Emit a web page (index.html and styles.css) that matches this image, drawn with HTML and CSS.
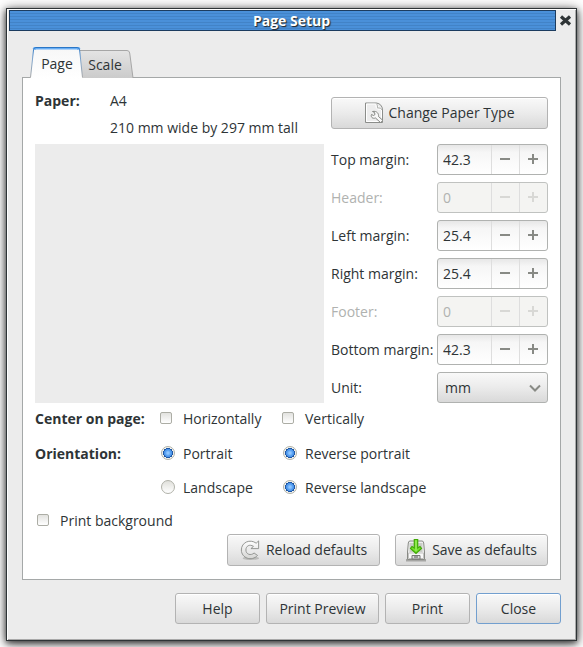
FILE: index.html
```html
<!DOCTYPE html>
<html lang="en">
<head>
<meta charset="utf-8">
<title>Page Setup</title>
<link rel="stylesheet" href="styles.css">
</head>
<body>
<main class="window">
  <header class="titlebar">
    <h1 class="title">Page Setup</h1>
    <button class="window-close" type="button" aria-label="Close window">
      <svg width="13" height="13" viewBox="0 0 13 13"><path d="M2 2.500 11 10.500M11 2.500 2 10.500" stroke="#2e3436" stroke-width="3.200" fill="none"/></svg>
    </button>
  </header>

  <div class="content">
    <nav class="tabs" role="tablist">
      <button class="tab tab-active" type="button" role="tab" aria-selected="true">
        <svg class="tab-shape" width="54" height="32" viewBox="0 0 54 32">
          <defs>
            <linearGradient id="edge" x1="0" y1="0" x2="0" y2="1"><stop offset="0" stop-color="#2a76c6"/><stop offset=".4" stop-color="#7fa5cd"/><stop offset="1" stop-color="#a6a6a6"/></linearGradient>
            <linearGradient id="face" x1="0" y1="0" x2="0" y2="1"><stop offset="0" stop-color="#f7f7f7"/><stop offset="1" stop-color="#fff"/></linearGradient>
          </defs>
          <path d="M.5 32V30.500L3.500 3Q3.800 .5 6 .5H47Q49.300 .5 49.600 3L52.500 30.500V32Z" fill="url(#face)"/>
          <path d="M4 2.500Q4.500 1 6 1H47Q48.600 1 49 2.500" fill="none" stroke="#68aef5" stroke-width="3"/>
          <path d="M.5 30.500 3.500 3Q3.800 .5 6 .5H47Q49.300 .5 49.600 3L52.500 30.500" fill="none" stroke="url(#edge)"/>
        </svg>
        <span class="tab-text">Page</span>
      </button>
      <button class="tab tab-idle" type="button" role="tab" aria-selected="false">
        <svg class="tab-shape" width="54" height="28" viewBox="0 0 54 28">
          <defs><linearGradient id="idle" x1="0" y1="0" x2="0" y2="1"><stop offset="0" stop-color="#e4e4e4"/><stop offset="1" stop-color="#cbcbcb"/></linearGradient></defs>
          <path d="M0 .5H47Q49.300 .5 49.700 3L53 28H0Z" fill="url(#idle)"/>
          <path d="M0 .5H47Q49.300 .5 49.700 3L53 28" fill="none" stroke="#a6a6a6"/>
        </svg>
        <span class="tab-text">Scale</span>
      </button>
    </nav>

    <section class="panel" role="tabpanel">
      <div class="columns">
        <div class="paper">
          <dl class="paper-info">
            <dt class="strong">Paper:</dt>
            <dd>A4</dd>
            <dd class="dimensions">210 mm wide by 297 mm tall</dd>
          </dl>
          <div class="preview"></div>
        </div>

        <form class="margins">
          <button class="button change-paper" type="button">
            <svg width="20" height="22" viewBox="0 0 20 22">
              <path d="M1.500 1H12.500C16 1.500 18.500 4 18.500 8V20.500H1.500Z" fill="#ededed" stroke="#8b8d8a"/>
              <path d="M2.500 2H12V5C12 7 15 7.500 17.500 7.500V19.500H2.500Z" fill="none" stroke="#fff"/>
              <path d="M12 1.500C14 3 13.500 5 13.500 6 15.500 5.500 17.500 6.500 18 8" fill="#fff" stroke="#b3b5b2"/>
              <path d="M8.500 9.500 10.500 10.500 11 12.500 9.500 13.500 7.500 12.500C6.500 15 8.500 17 11.500 16L16.500 20.500 19 18.500 14.500 14.500C15 12 13 8.500 8.500 9.500Z" fill="#f8f8f8" stroke="#858783"/>
            </svg>
            <span>Change Paper Type</span>
          </button>

          <label for="top">Top margin:</label>
          <div class="spin"><input id="top" type="text" value="42.3"><button type="button" aria-label="Decrease top margin"><i class="minus"></i></button><button type="button" aria-label="Increase top margin"><i class="plus"></i></button></div>

          <label class="dim" for="header">Header:</label>
          <div class="spin spin-off"><input id="header" type="text" value="0" disabled><button type="button" disabled aria-label="Decrease header"><i class="minus"></i></button><button type="button" disabled aria-label="Increase header"><i class="plus"></i></button></div>

          <label for="left">Left margin:</label>
          <div class="spin"><input id="left" type="text" value="25.4"><button type="button" aria-label="Decrease left margin"><i class="minus"></i></button><button type="button" aria-label="Increase left margin"><i class="plus"></i></button></div>

          <label for="right">Right margin:</label>
          <div class="spin"><input id="right" type="text" value="25.4"><button type="button" aria-label="Decrease right margin"><i class="minus"></i></button><button type="button" aria-label="Increase right margin"><i class="plus"></i></button></div>

          <label class="dim" for="footer">Footer:</label>
          <div class="spin spin-off"><input id="footer" type="text" value="0" disabled><button type="button" disabled aria-label="Decrease footer"><i class="minus"></i></button><button type="button" disabled aria-label="Increase footer"><i class="plus"></i></button></div>

          <label for="bottom">Bottom margin:</label>
          <div class="spin"><input id="bottom" type="text" value="42.3"><button type="button" aria-label="Decrease bottom margin"><i class="minus"></i></button><button type="button" aria-label="Increase bottom margin"><i class="plus"></i></button></div>

          <label for="unit">Unit:</label>
          <div class="select">
            <select id="unit"><option>mm</option></select>
            <svg class="chevron" width="12" height="8" viewBox="0 0 12 8"><path d="M1 1.500 6 6.500 11 1.500" fill="none" stroke="#888a85" stroke-width="2"/></svg>
          </div>
        </form>
      </div>

      <div class="choices">
        <span class="strong">Center on page:</span>
        <label class="choice"><input class="check" type="checkbox">Horizontally</label>
        <label class="choice"><input class="check" type="checkbox">Vertically</label>
      </div>
      <div class="choices choices-radio">
        <span class="strong">Orientation:</span>
        <label class="choice"><input class="radio" type="radio" name="portrait" checked>Portrait</label>
        <label class="choice"><input class="radio" type="radio" name="reverse-portrait" checked>Reverse portrait</label>
        <span></span>
        <label class="choice"><input class="radio" type="radio" name="landscape">Landscape</label>
        <label class="choice"><input class="radio" type="radio" name="reverse-landscape" checked>Reverse landscape</label>
      </div>
      <label class="choice background"><input class="check" type="checkbox">Print background</label>

      <div class="defaults">
        <button class="button" type="button">
          <svg width="20" height="22" viewBox="0 0 22 23">
            <defs><linearGradient id="metal" x1="0" y1="0" x2="0" y2="1"><stop offset="0" stop-color="#fff"/><stop offset="1" stop-color="#d5d5d3"/></linearGradient></defs>
            <ellipse cx="12" cy="20.500" rx="9" ry="2" fill="#bcbcba"/>
            <path d="M20.500 1.500V10H12L14.800 7.500C10.500 4.800 6.500 7 6.500 11.500 6.500 16.500 12 18 15.500 14.800L19.300 17.500C13 24.500 1.500 20.500 1.500 11.500 1.500 3 11-1 17.800 4Z" fill="url(#metal)" stroke="#8b8d8a"/>
          </svg>
          <span>Reload defaults</span>
        </button>
        <button class="button" type="button">
          <svg width="20" height="23" viewBox="0 0 20 23">
            <rect x="0" y="20" width="20" height="2.500" fill="#a5a5a3"/>
            <path d="M4 2H16Q17.500 2 17.700 4L18.500 13V20.500H1.500V13L2.300 4Q2.500 2 4 2Z" fill="#eee" stroke="#888a85"/>
            <path d="M3.500 4H16.500V13H3.500Z" fill="#c9ccc6"/>
            <path d="M2.500 14H17.500V19.500H2.500Z" fill="#f8f8f8" stroke="#c3c3c1"/>
            <path d="M6 16.500H14V20H6Z" fill="#ddd" stroke="#777"/><path d="M8 18H12" stroke="#555"/>
            <path d="M8.300 .5H11.700V9L14 7.500 15.500 9.500 10 14.500 4.500 9.500 6 7.500 8.300 9Z" fill="#73e02c" stroke="#42a906" stroke-width="1.200"/>
            <path d="M10 1.500V12" stroke="#a6f36a"/>
          </svg>
          <span>Save as defaults</span>
        </button>
      </div>
    </section>

    <footer class="actions">
      <button class="button" type="button">Help</button>
      <button class="button wide" type="button">Print Preview</button>
      <button class="button" type="button">Print</button>
      <button class="button focused" type="button">Close</button>
    </footer>
  </div>
</main>
</body>
</html>
```
FILE: styles.css
```css
* { box-sizing: border-box; }

body {
  margin: 0;
  padding: 8px 6px 6px;
  background: #fff;
  color: #2e3436;
  font: 14px/20px "Open Sans", "Noto Sans", sans-serif;
}

button, input, select { font: inherit; color: inherit; margin: 0; padding: 0; }

.window {
  background: #ececec;
  border: 1px solid #2e3436;
  box-shadow: inset 1px 1px #fff, inset -1px -1px #a9a9a9,
    0 2px 6px rgba(0, 0, 0, .6), 0 2px 12px rgba(0, 0, 0, .6);
  padding: 1px 1px 16px 2px;
}

.titlebar { display: flex; }

.title {
  flex: 1;
  height: 21px;
  margin: 0;
  padding-left: 18px;
  border: 1px solid #1c3c5f;
  background: repeating-linear-gradient(#4a90d9 0 2px, #4283c7 2px 3px);
  color: #fff;
  font-size: 14px;
  font-weight: bold;
  line-height: 20px;
  text-align: center;
  text-shadow: 1px 1px 1px #222;
}

.window-close {
  display: grid;
  place-items: center;
  width: 19px;
  border: 0;
  background: none;
}

.content { padding: 16px 14px 0 13px; }

.tabs {
  display: flex;
  align-items: flex-end;
  padding-left: 8px;
  position: relative;
}

.tab {
  position: relative;
  height: 31px;
  padding-top: 2px;
  border: 0;
  background: none;
}

.tab-active { z-index: 2; width: 54px; margin-bottom: -1px; }
.tab-idle { z-index: 1; width: 54px; height: 27px; margin-left: -4px; padding-right: 4px; }
.tab-shape { position: absolute; top: 0; left: 0; }
.tab-text { position: relative; }

.panel {
  padding: 13px 12px;
  border: 1px solid #a5a8a8;
  background: #fff;
}

.columns { display: grid; grid-template-columns: 1fr 217px; gap: 7px; }
.paper { display: flex; flex-direction: column; }

.paper-info {
  display: grid;
  grid-template-columns: 75px 1fr;
  row-gap: 7px;
  margin: 0 0 6px;
}

.paper-info dd { margin: 0; }
.paper-info .dimensions { grid-column: 2; }
.strong { font-weight: bold; }
.preview { flex: 1; background: #ececec; }

.margins {
  display: grid;
  grid-template-columns: 1fr 111px;
  row-gap: 7px;
  align-items: center;
  padding-top: 6px;
  white-space: nowrap;
}

.dim { color: #b0b2b0; }

.button {
  display: flex;
  align-items: center;
  justify-content: center;
  gap: 4px;
  height: 32px;
  border: 1px solid #b3b3b3;
  border-radius: 3px;
  background: linear-gradient(#f9f9f9, #ebebeb 50%, #d9d9d9);
  box-shadow: inset 0 1px #fff;
  white-space: nowrap;
}

.change-paper { grid-column: 1 / -1; margin-bottom: 8px; }

.spin {
  display: flex;
  height: 31px;
  border: 1px solid #b0b2b0;
  border-radius: 3px;
  background: linear-gradient(#e7e7e7, #f6f6f6 25%, #fff);
  overflow: hidden;
}

.spin input {
  flex: 1;
  min-width: 0;
  padding-left: 5px;
  border: 0;
  background: none;
}

.spin button {
  display: flex;
  align-items: center;
  justify-content: flex-start;
  width: 28px;
  padding-left: 8px;
  border: 0;
  border-left: 1px solid #dedede;
  background: none;
  color: #888a85;
}

.spin-off { background: #f4f4f2; border-color: #c0c2c0; }
.spin-off input { color: #b0b2b0; }
.spin-off button { color: #d8d8d5; }

.minus, .plus {
  width: 10px;
  height: 10px;
  margin-bottom: 1px;
  background: linear-gradient(currentColor, currentColor) center / 10px 2px no-repeat;
}

.plus {
  background: linear-gradient(currentColor, currentColor) center / 10px 2px no-repeat,
    linear-gradient(currentColor, currentColor) center / 2px 10px no-repeat;
}

.select { display: grid; align-items: center; }

.select select {
  grid-area: 1 / 1;
  height: 31px;
  padding-left: 7px;
  appearance: none;
  border: 1px solid #b0b2b0;
  border-radius: 3px;
  background: linear-gradient(#f9f9f9, #ebebeb 50%, #d9d9d9);
}

.chevron { grid-area: 1 / 1; justify-self: end; margin-right: 7px; pointer-events: none; }

.choices {
  display: grid;
  grid-template-columns: 125px 122px 1fr;
  align-items: center;
  margin-top: 6px;
  white-space: nowrap;
}

.choices-radio { row-gap: 14px; margin-top: 15px; }
.choice { display: flex; align-items: center; gap: 11px; }
.choices-radio .choice { gap: 8px; padding-left: 1px; }
.background { margin-top: 13px; padding-left: 2px; }

.check, .radio { appearance: none; flex: none; margin-bottom: 2px; }

.check {
  width: 12px;
  height: 12px;
  border: 1px solid #acada5;
  border-radius: 2px;
  background: linear-gradient(#e2e2df, #fff);
}

.radio {
  width: 14px;
  height: 14px;
  border: 1px solid #b0b1a8;
  border-radius: 50%;
  background: linear-gradient(#e0e0db, #fff);
}

.radio:checked {
  background: radial-gradient(circle, #8fc6ff 0 1px, #4f9bf0 3px, #4a90e4 4px, #1f57a3 4px 5px, #f4f4f0 5px);
}

.defaults { display: flex; justify-content: flex-end; gap: 15px; margin-top: 3px; }
.defaults .button { width: 153px; gap: 6px; }

.actions { display: flex; justify-content: flex-end; gap: 6px; margin-top: 13px; }
.actions .button { width: 85px; height: 31px; }
.actions .wide { width: 113px; }
.actions .focused { border-color: #729fcf; }
```
